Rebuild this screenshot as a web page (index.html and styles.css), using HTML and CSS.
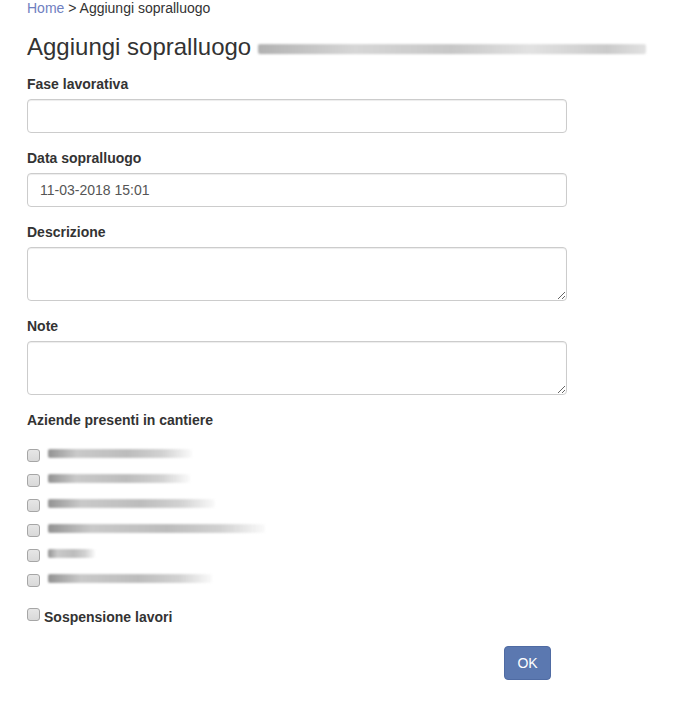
FILE: index.html
```html
<!DOCTYPE html>
<html lang="it">
<head>
<meta charset="utf-8">
<title>Aggiungi sopralluogo</title>
<link rel="stylesheet" href="styles.css">
</head>
<body>
<div class="container">
  <div class="breadcrumb"><a href="#" class="crumb-link">Home</a> &gt; Aggiungi sopralluogo</div>
  <h1 class="title">Aggiungi sopralluogo <span class="blur blur-title" aria-hidden="true"></span></h1>
  <form class="form">
    <div class="form-group">
      <label class="field-label">Fase lavorativa</label>
      <input class="form-control" type="text">
    </div>
    <div class="form-group">
      <label class="field-label">Data sopralluogo</label>
      <input class="form-control" type="text" value="11-03-2018 15:01">
    </div>
    <div class="form-group">
      <label class="field-label">Descrizione</label>
      <textarea class="form-control textarea" rows="2"></textarea>
    </div>
    <div class="form-group">
      <label class="field-label">Note</label>
      <textarea class="form-control textarea" rows="2"></textarea>
    </div>
    <div class="form-group group-aziende">
      <label class="field-label">Aziende presenti in cantiere</label>
      <div class="check-list">
        <label class="check-row"><input type="checkbox" class="cb"><span class="blur w1" aria-hidden="true"></span></label>
        <label class="check-row"><input type="checkbox" class="cb"><span class="blur w2" aria-hidden="true"></span></label>
        <label class="check-row"><input type="checkbox" class="cb"><span class="blur w3" aria-hidden="true"></span></label>
        <label class="check-row"><input type="checkbox" class="cb"><span class="blur w4" aria-hidden="true"></span></label>
        <label class="check-row"><input type="checkbox" class="cb"><span class="blur w5" aria-hidden="true"></span></label>
        <label class="check-row"><input type="checkbox" class="cb"><span class="blur w6" aria-hidden="true"></span></label>
      </div>
    </div>
    <label class="check-bold"><input type="checkbox" class="cb cb-bold">Sospensione lavori</label>
    <div class="actions">
      <button type="button" class="btn-ok">OK</button>
    </div>
  </form>
</div>
</body>
</html>
```
FILE: styles.css
```css
html, body {
  margin: 0;
  padding: 0;
  background: #fff;
}
body {
  font-family: "Liberation Sans", Arial, Helvetica, sans-serif;
  font-size: 14px;
  line-height: 20px;
  color: #333;
}
.container {
  padding: 0 0 0 27px;
}
.breadcrumb {
  line-height: 16px;
  height: 16px;
  color: #333;
}
.crumb-link {
  color: #6f80bf;
  text-decoration: none;
}
.title {
  margin: 18px 0 0;
  font-size: 24px;
  font-weight: 500;
  line-height: 26px;
  color: #333;
  display: flex;
  align-items: center;
  white-space: nowrap;
}
.blur {
  display: inline-block;
  height: 9px;
  background:
    repeating-linear-gradient(to bottom, rgba(255,255,255,0.2) 0 1px, rgba(0,0,0,0.04) 1px 2px),
    linear-gradient(to right, #8a8a8a 0%, #c8c8c8 20%, #b9b9b9 55%, #d2d2d2 80%, rgba(255,255,255,0) 100%);
  filter: blur(0.8px);
  border-radius: 2px;
}
.blur-title {
  width: 388px;
  height: 10px;
  margin-left: 7px;
  margin-top: 3px;
  background:
    repeating-linear-gradient(to bottom, rgba(255,255,255,0.3) 0 1px, rgba(0,0,0,0.04) 1px 2px),
    linear-gradient(to right, #a8a8a8 0%, #d4d4d4 25%, #c2c2c2 50%, #e2e2e2 70%, #c6c6c6 90%, #e2e2e2 100%);
}
.form {
  width: 540px;
  margin-top: 14px;
}
.form-group {
  margin-bottom: 15px;
}
.field-label {
  display: block;
  font-weight: bold;
  margin-bottom: 5px;
}
.form-control {
  display: block;
  box-sizing: border-box;
  width: 100%;
  height: 34px;
  padding: 6px 12px;
  font-family: inherit;
  font-size: 14px;
  line-height: 20px;
  color: #555;
  background: #fff;
  border: 1px solid #ccc;
  border-radius: 4px;
  box-shadow: inset 0 1px 1px rgba(0,0,0,0.075);
  margin: 0;
}
.textarea {
  height: 54px;
  resize: vertical;
}
.group-aziende {
  margin-bottom: 17px;
}
.check-list {
  display: flex;
  flex-direction: column;
  gap: 5px;
  margin-top: 15px;
}
.check-row {
  display: flex;
  align-items: center;
  height: 20px;
}
.cb {
  -webkit-appearance: none;
  appearance: none;
  box-sizing: border-box;
  width: 13px;
  height: 13px;
  margin: 0 8px 0 0;
  border: 1px solid #a6a6a6;
  border-radius: 3px;
  background: linear-gradient(#e6e6e6, #d9d9d9);
  flex: none;
}
.check-row .blur {
  margin-top: -3px;
}
.w1 { width: 144px; }
.w2 { width: 142px; }
.w3 { width: 167px; }
.w4 { width: 217px; }
.w5 { width: 47px; }
.w6 { width: 164px; }
.check-bold {
  display: flex;
  align-items: flex-start;
  height: 20px;
  font-weight: bold;
}
.cb-bold {
  margin: 1px 4px 0 0;
}
.actions {
  display: flex;
  justify-content: flex-end;
  padding-right: 16px;
  margin-top: 19px;
}
.btn-ok {
  width: 47px;
  height: 34px;
  padding: 0;
  font-family: inherit;
  font-size: 14px;
  color: #fff;
  background: #5b78b0;
  border: 1px solid #4f6ba3;
  border-radius: 4px;
}
```
